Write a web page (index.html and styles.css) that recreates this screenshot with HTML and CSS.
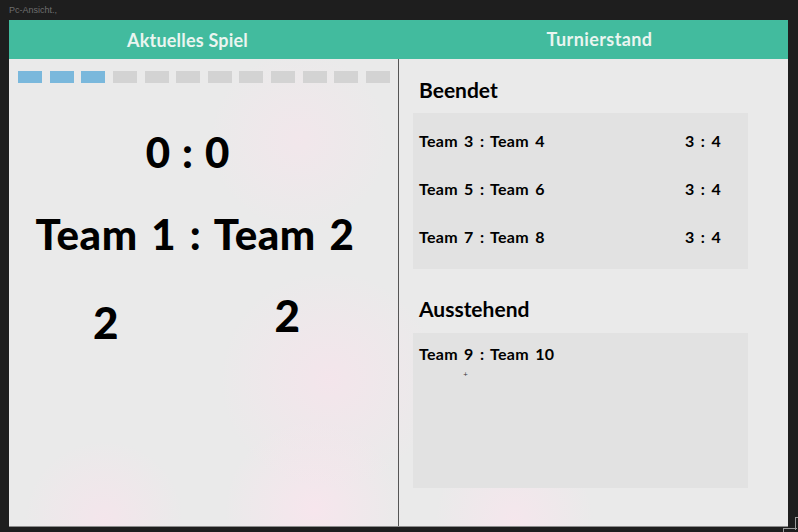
FILE: index.html
```html
<!DOCTYPE html>
<html lang="de">
<head>
<meta charset="utf-8">
<title>Pc-Ansicht</title>
<link rel="stylesheet" href="styles.css">
</head>
<body>
<div class="label">Pc-Ansicht.,</div>
<div class="frame">
  <div class="header">
    <div class="h-left">Aktuelles Spiel</div>
    <div class="h-right">Turnierstand</div>
  </div>
  <div class="content">
    <section class="game">
      <div class="progress">
        <span class="seg on"></span><span class="seg on"></span><span class="seg on"></span>
        <span class="seg"></span><span class="seg"></span><span class="seg"></span>
        <span class="seg"></span><span class="seg"></span><span class="seg"></span>
        <span class="seg"></span><span class="seg"></span><span class="seg"></span>
      </div>
      <div class="score">0 : 0</div>
      <div class="teams">Team 1 : Team 2</div>
      <div class="points">
        <span class="p1">2</span>
        <span class="p2">2</span>
      </div>
    </section>
    <section class="standings">
      <h2 class="title">Beendet</h2>
      <div class="box done">
        <div class="row"><span>Team 3 : Team 4</span><span>3 : 4</span></div>
        <div class="row"><span>Team 5 : Team 6</span><span>3 : 4</span></div>
        <div class="row"><span>Team 7 : Team 8</span><span>3 : 4</span></div>
      </div>
      <h2 class="title second">Ausstehend</h2>
      <div class="box pending">
        <div class="prow">Team 9 : Team 10</div>
        <span class="mark">+</span>
      </div>
    </section>
  </div>
</div>
<div class="resize"><span class="r1"></span><span class="r2"></span></div>
</body>
</html>
```

FILE: styles.css
```css
html, body {
  margin: 0;
  padding: 0;
}
body {
  background: #1e1e1e;
  width: 798px;
  height: 532px;
  overflow: hidden;
  position: relative;
  font-family: Lato, "Noto Sans", sans-serif;
}
.label {
  height: 20px;
  padding-left: 9px;
  font-family: "Liberation Sans", Arial, sans-serif;
  font-size: 9px;
  line-height: 21px;
  color: #6e6e6e;
}
.frame {
  margin-left: 9px;
  width: 779px;
  height: 506px;
  display: flex;
  flex-direction: column;
  background-color: #eaeaea;
  background-image:
    radial-gradient(circle at 290px 120px, rgba(248, 228, 236, 0.55), rgba(248, 228, 236, 0) 90px),
    radial-gradient(circle at 320px 360px, rgba(250, 226, 236, 0.6), rgba(250, 226, 236, 0) 110px),
    radial-gradient(circle at 95px 500px, rgba(250, 226, 236, 0.6), rgba(250, 226, 236, 0) 80px),
    radial-gradient(circle at 305px 490px, rgba(252, 228, 238, 0.7), rgba(252, 228, 238, 0) 90px),
    radial-gradient(circle at 505px 500px, rgba(252, 228, 238, 0.6), rgba(252, 228, 238, 0) 80px);
  box-shadow: 0 1px 0 #8c8c8c;
}
.header {
  height: 39px;
  flex: none;
  display: flex;
  background: #42bb9e;
  color: #eaf5f0;
  font-size: 18px;
  font-weight: 700;
  line-height: 40px;
  letter-spacing: 0.2px;
}
.h-left {
  width: 357px;
  text-align: center;
}
.h-right {
  flex: 1;
  padding-left: 45px;
  text-align: center;
  line-height: 38px;
  letter-spacing: 0.4px;
}
.content {
  flex: 1;
  display: flex;
}
.game {
  width: 389px;
  border-right: 1px solid #555555;
  display: flex;
  flex-direction: column;
}
.progress {
  margin: 12px 8px 0 9px;
  height: 12px;
  display: flex;
  justify-content: space-between;
}
.seg {
  width: 24px;
  height: 12px;
  background: #d3d3d3;
}
.seg.on {
  background: #7ab8dc;
}
.score {
  width: 357px;
  margin-top: 48px;
  text-align: center;
  font-size: 42px;
  font-weight: 900;
  line-height: 42px;
  color: #000;
  word-spacing: 2px;
}
.teams {
  width: 372px;
  margin-top: 40px;
  text-align: center;
  font-size: 42px;
  font-weight: 900;
  line-height: 42px;
  color: #000;
  letter-spacing: 0.6px;
  word-spacing: 3px;
}
.points {
  margin-top: 42px;
  display: flex;
  align-items: flex-start;
  font-size: 44px;
  font-weight: 900;
  line-height: 44px;
  color: #000;
}
.p1 {
  margin-left: 84px;
  padding-top: 3px;
}
.p2 {
  margin-left: 156px;
  margin-top: -4px;
}
.standings {
  flex: 1;
  padding-left: 14px;
  display: flex;
  flex-direction: column;
  position: relative;
}
.title {
  margin: 18px 0 0 6px;
  font-size: 21px;
  font-weight: 700;
  line-height: 25px;
  color: #000;
}
.title.second {
  margin-top: 27px;
}
.box {
  width: 335px;
  background: #e2e2e2;
  box-sizing: border-box;
}
.done {
  margin-top: 11px;
  padding: 3px 27px 9px 6px;
}
.row {
  height: 48px;
  display: flex;
  justify-content: space-between;
  align-items: center;
  font-size: 16px;
  font-weight: 700;
  color: #000;
  letter-spacing: 0.3px;
  word-spacing: 2px;
}
.pending {
  margin-top: 12px;
  height: 155px;
  padding: 11px 6px 9px;
  position: relative;
}
.prow {
  font-size: 16px;
  font-weight: 700;
  line-height: 20px;
  color: #000;
  letter-spacing: 0.3px;
  word-spacing: 2px;
}
.mark {
  position: absolute;
  left: 50px;
  top: 38px;
  font-family: "DejaVu Sans", sans-serif;
  font-size: 6px;
  line-height: 6px;
  color: #333;
}
.resize {
  position: absolute;
  left: 783px;
  top: 517px;
  width: 15px;
  height: 15px;
}
.r1 {
  position: absolute;
  left: 12px;
  top: 0;
  width: 3px;
  height: 12px;
  border-left: 1px solid #9a9a9a;
  border-top: 1px solid #9a9a9a;
}
.r2 {
  position: absolute;
  left: 0;
  top: 11px;
  width: 13px;
  height: 4px;
  border-left: 1px solid #9a9a9a;
  border-top: 1px solid #9a9a9a;
}
```
